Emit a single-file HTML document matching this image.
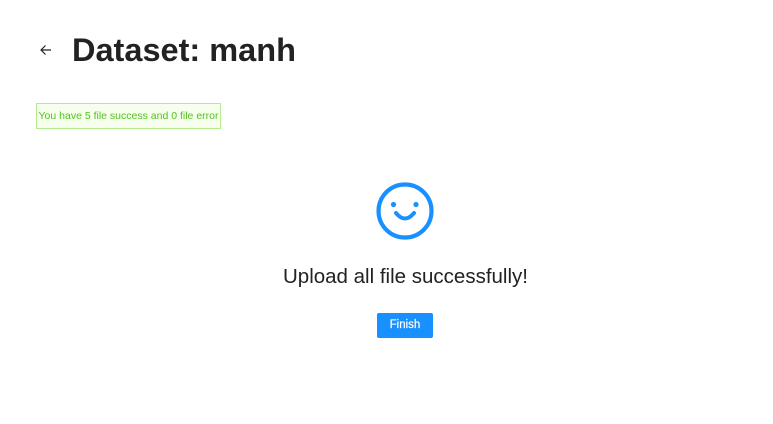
<!DOCTYPE html>
<html><head><style>
body{margin:0;width:773px;height:424px;background:#fff;font-family:"Liberation Sans",sans-serif;position:relative;overflow:hidden}
.t{position:absolute;left:72px;top:28px;font-size:32.5px;font-weight:bold;color:#222;line-height:44px;letter-spacing:0px}
.a{position:absolute;left:36px;top:103px;width:183px;height:24px;background:#f6ffed;border:1px solid #b7eb8f;color:#52c41a;font-size:10.5px;line-height:24px;text-align:center;box-sizing:content-box}
.m{position:absolute;left:0;width:811px;top:264px;text-align:center;font-size:20.5px;color:#222;line-height:26px}
.b{position:absolute;left:377px;top:313px;width:56px;height:25px;background:#1890ff;border-radius:2px;color:#fff;font-size:11.5px;line-height:25px;text-align:center;-webkit-text-stroke:0.2px #fff}
</style></head><body>
<svg style="position:absolute;left:38px;top:42px" width="16" height="16" viewBox="0 0 16 16"><path d="M13 8H3M7.5 3.5L3 8l4.5 4.5" fill="none" stroke="#222" stroke-width="1.2"/></svg>
<div class="t">Dataset: manh</div>
<div class="a">You have 5 file success and 0 file error</div>
<svg style="position:absolute;left:375px;top:182px" width="60" height="60" viewBox="0 0 60 60"><circle cx="30" cy="29" r="26.5" fill="none" stroke="#1890ff" stroke-width="4.2"/><circle cx="18.5" cy="22.5" r="2.6" fill="#1890ff"/><circle cx="41" cy="22.5" r="2.6" fill="#1890ff"/><path d="M21 31q9 11 18 0" fill="none" stroke="#1890ff" stroke-width="4" stroke-linecap="round"/></svg>
<div class="m">Upload all file successfully!</div>
<div class="b">Finish</div>
</body></html>
